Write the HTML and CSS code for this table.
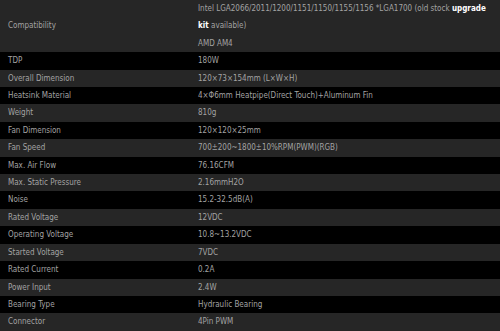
FILE: index.html
```html
<!DOCTYPE html>
<html>
<head>
<meta charset="utf-8">
<link rel="stylesheet" href="styles.css">
</head>
<body>
<table class="spec">
<tbody>
<tr class="odd"><td class="label">Compatibility</td><td class="value">Intel LGA2066/2011/1200/1151/1150/1155/1156 *LGA1700 (old stock <b>upgrade</b> <b>kit</b> available)<br>AMD AM4</td></tr>
<tr class="even"><td class="label">TDP</td><td class="value">180W</td></tr>
<tr class="odd"><td class="label">Overall Dimension</td><td class="value">120×73×154mm (L×W×H)</td></tr>
<tr class="even"><td class="label">Heatsink Material</td><td class="value">4×Φ6mm Heatpipe(Direct Touch)+Aluminum Fin</td></tr>
<tr class="odd"><td class="label">Weight</td><td class="value">810g</td></tr>
<tr class="even"><td class="label">Fan Dimension</td><td class="value">120×120×25mm</td></tr>
<tr class="odd"><td class="label">Fan Speed</td><td class="value">700±200~1800±10%RPM(PWM)(RGB)</td></tr>
<tr class="even"><td class="label">Max. Air Flow</td><td class="value">76.16CFM</td></tr>
<tr class="odd"><td class="label">Max. Static Pressure</td><td class="value">2.16mmH2O</td></tr>
<tr class="even"><td class="label">Noise</td><td class="value">15.2-32.5dB(A)</td></tr>
<tr class="odd"><td class="label">Rated Voltage</td><td class="value">12VDC</td></tr>
<tr class="even"><td class="label">Operating Voltage</td><td class="value">10.8~13.2VDC</td></tr>
<tr class="odd"><td class="label">Started Voltage</td><td class="value">7VDC</td></tr>
<tr class="even"><td class="label">Rated Current</td><td class="value">0.2A</td></tr>
<tr class="odd"><td class="label">Power Input</td><td class="value">2.4W</td></tr>
<tr class="even"><td class="label">Bearing Type</td><td class="value">Hydraulic Bearing</td></tr>
<tr class="odd"><td class="label">Connector</td><td class="value">4Pin PWM</td></tr>
</tbody>
</table>
</body>
</html>
```
FILE: styles.css
```css
html, body {
  margin: 0;
  padding: 0;
  background: #000;
}
.spec {
  width: 500px;
  border-collapse: collapse;
  font-family: "DejaVu Sans Condensed", "DejaVu Sans", Verdana, sans-serif;
  font-size: 8px;
  color: #a3a3a3;
}
.spec td {
  padding: 0 8px;
  line-height: 17.4px;
  vertical-align: middle;
}
.spec .label {
  width: 174px;
}
.spec .value {
  padding-right: 6px;
}
.spec .odd {
  background: #262626;
}
.spec .even {
  background: #000;
}
.spec b {
  color: #fff;
  font-weight: bold;
}
```
